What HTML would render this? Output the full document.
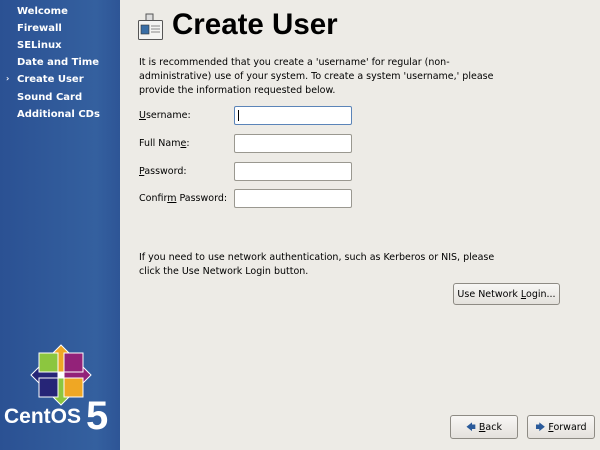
<!DOCTYPE html>
<html><head><style>
body{margin:0;width:600px;height:450px;overflow:hidden;background:#edebe6;font-family:"DejaVu Sans",sans-serif;position:relative;color:#000}
#side{position:absolute;left:0;top:0;width:120px;height:450px;background:linear-gradient(90deg,#2b5193,#34609f 80%,#2e5596);}
#side div{position:absolute;left:17px;color:#fff;font-weight:bold;font-size:10px;font-family:"DejaVu Sans",sans-serif;white-space:nowrap}
.a{position:absolute;font-size:9.5px;white-space:nowrap}
.in{position:absolute;left:234px;width:116px;height:17px;background:#fff;border:1px solid #9a9890;border-radius:2px}
.btn{position:absolute;height:22px;border:1px solid #8e8b84;border-radius:3px;background:linear-gradient(#f8f7f5,#e4e1dc);font-size:9.5px;text-align:center;line-height:22px;box-sizing:border-box;white-space:nowrap}
u{text-decoration:underline}
</style></head><body>
<div id="side">
<div style="top:6px">Welcome</div>
<div style="top:23px">Firewall</div>
<div style="top:40px">SELinux</div>
<div style="top:57px">Date and Time</div>
<div style="top:74px;left:6px;font-size:8px">›</div>
<div style="top:74px">Create User</div>
<div style="top:92px">Sound Card</div>
<div style="top:109px">Additional CDs</div>
<svg style="position:absolute;left:28px;top:342px" width="66" height="66" viewBox="-33 -33 66 66">
<g transform="rotate(45)"><rect x="-21" y="-21" width="42" height="42" fill="#fff"/></g>
<rect x="-22" y="-22" width="20" height="20" fill="#8cc63f" stroke="#fff"/>
<rect x="2" y="-22" width="20" height="20" fill="#932279" stroke="#fff"/>
<rect x="-22" y="2" width="20" height="20" fill="#262577" stroke="#fff"/>
<rect x="2" y="2" width="20" height="20" fill="#efa724" stroke="#fff"/>
<polygon points="0,-30 8,-22 3,-22 3,-3 -3,-3 -3,-22 -8,-22" fill="#efa724" stroke="#fff"/>
<polygon points="30,0 22,8 22,3 3,3 3,-3 22,-3 22,-8" fill="#932279" stroke="#fff"/>
<polygon points="0,30 8,22 3,22 3,3 -3,3 -3,22 -8,22" fill="#8cc63f" stroke="#fff"/>
<polygon points="-30,0 -22,8 -22,3 -3,3 -3,-3 -22,-3 -22,-8" fill="#262577" stroke="#fff"/>
</svg>
<div style="top:405px;left:4px;font-size:21px;font-weight:bold;font-family:'Liberation Sans',sans-serif">CentOS</div>
<div style="top:394px;left:86px;font-size:40px;font-weight:bold;font-family:'Liberation Sans',sans-serif">5</div>
</div>
<svg style="position:absolute;left:137px;top:13px" width="28" height="28" viewBox="0 0 28 28">
<rect x="9" y="1" width="7" height="8" fill="#ddd" stroke="#555"/>
<rect x="1.5" y="7.5" width="24" height="19" fill="#f4f4f2" stroke="#555" rx="1"/>
<rect x="4" y="12" width="8" height="9" fill="#3a6ea5" stroke="#333" stroke-width=".6"/>
<line x1="14" y1="13" x2="23" y2="13" stroke="#888"/><line x1="14" y1="16" x2="23" y2="16" stroke="#888"/><line x1="14" y1="19" x2="23" y2="19" stroke="#888"/>
</svg>
<div class="a" style="left:172px;top:8px;font-size:29.5px;font-weight:bold;font-family:'Liberation Sans',sans-serif">Create User</div>
<div class="a" style="left:139px;top:56px;line-height:14px">It is recommended that you create a 'username' for regular (non-<br>administrative) use of your system. To create a system 'username,' please<br>provide the information requested below.</div>
<div class="a" style="left:139px;top:110px"><u>U</u>sername:</div>
<div class="a" style="left:139px;top:138px">Full Nam<u>e</u>:</div>
<div class="a" style="left:139px;top:166px"><u>P</u>assword:</div>
<div class="a" style="left:139px;top:193px">Confir<u>m</u> Password:</div>
<div class="in" style="top:106px;border-color:#5b84b8"><div style="position:absolute;left:3px;top:3px;width:1px;height:11px;background:#000"></div></div>
<div class="in" style="top:134px"></div>
<div class="in" style="top:162px"></div>
<div class="in" style="top:189px"></div>
<div class="a" style="left:139px;top:251px;line-height:14px">If you need to use network authentication, such as Kerberos or NIS, please<br>click the Use Network Login button.</div>
<div class="btn" style="left:453px;top:283px;width:107px">Use Network <u>L</u>ogin...</div>
<div class="btn" style="left:450px;top:415px;width:68px;height:24px;line-height:24px"><span style="color:#2a5a9a">🡄</span> <u>B</u>ack</div>
<div class="btn" style="left:527px;top:415px;width:68px;height:24px;line-height:24px"><span style="color:#2a5a9a">🡆</span> <u>F</u>orward</div>
</body></html>
